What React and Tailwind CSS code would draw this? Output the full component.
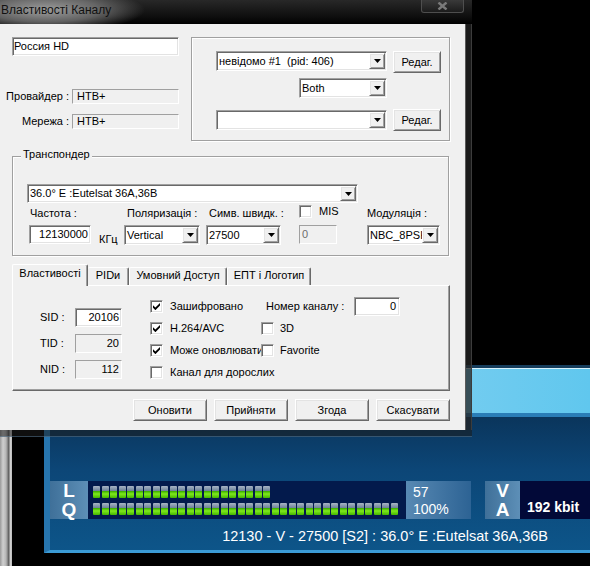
const SUNKEN =
  "border border-t-[#a0a0a0] border-l-[#a0a0a0] border-b-white border-r-white shadow-[inset_1px_1px_0_#696969,inset_-1px_-1px_0_#e3e3e3]";
const STATIC = "border border-t-[#a0a0a0] border-l-[#a0a0a0] border-b-white border-r-white";
const RAISED =
  "border border-t-white border-l-white border-b-[#696969] border-r-[#696969] shadow-[inset_1px_1px_0_#e3e3e3,inset_-1px_-1px_0_#a0a0a0]";
const ETCHED = "border border-[#a0a0a0] shadow-[inset_1px_1px_0_#fff,1px_1px_0_#fff]";

const SEG =
  "h-[12px] w-[7px] rounded-[1px] bg-[linear-gradient(to_bottom,#a7b4c4_0%,#71849b_38%,#3cae00_44%,#7fe91c_66%,#43b500_100%)]";

function DropBtn() {
  return (
    <div className={`flex w-[16px] shrink-0 items-center justify-center bg-[#f0f0f0] ${RAISED}`}>
      <svg width="7" height="4" viewBox="0 0 7 4">
        <path d="M0 0h7L3.5 4z" fill="#000" />
      </svg>
    </div>
  );
}

function Combo({ className = "", value = "" }) {
  return (
    <div className={`flex bg-white p-[1px] ${SUNKEN} ${className}`}>
      <div className="flex flex-1 items-center overflow-hidden whitespace-pre pl-[1px]">{value}</div>
      <DropBtn />
    </div>
  );
}

function Button({ className = "", children }) {
  return (
    <div className={`flex items-center justify-center bg-[#f0f0f0] ${RAISED} ${className}`}>{children}</div>
  );
}

function Check({ checked }) {
  return (
    <div className={`flex h-[13px] w-[13px] shrink-0 items-center justify-center bg-white ${SUNKEN}`}>
      {checked && (
        <svg width="7" height="7" viewBox="0 0 7 7">
          <path d="M0 2.2L2.4 4.6L7 0V2.6L2.4 7.2L0 4.8Z" fill="#000" />
        </svg>
      )}
    </div>
  );
}

function Tab({ className = "", children }) {
  return (
    <div
      className={`flex h-[18px] justify-center rounded-t-[2px] border-t border-r border-t-white border-r-[#696969] pt-[1px] whitespace-nowrap shadow-[inset_-1px_0_0_#a0a0a0] ${className}`}
    >
      {children}
    </div>
  );
}

function TitleBar() {
  return (
    <div className="flex h-[24px] w-[472px] items-start bg-[radial-gradient(ellipse_100px_22px_at_45px_10px,rgba(165,165,165,0.95),rgba(125,125,125,0.75)_55%,rgba(0,0,0,0)_100%),linear-gradient(to_bottom,#282828,#0e0e0e_70%,#000)]">
      <span className="pl-[1px] pt-[3px] text-[12px] leading-[14px] text-[#111]">Властивості Каналу</span>
      <div className="ml-auto mr-[8px] flex h-[13px] w-[43px] items-center justify-center rounded-b-[3px] border border-t-0 border-[#4e4e4e] bg-[linear-gradient(to_bottom,#3a3a3a,#1c1c1c)]">
        <svg width="11" height="8" viewBox="0 0 11 8">
          <path d="M1.5 0.5L9.5 7.5M9.5 0.5L1.5 7.5" stroke="#7a7a7a" strokeWidth="2.4" />
        </svg>
      </div>
    </div>
  );
}

function Client() {
  return (
    <div className="flex h-[406px] w-[465px] flex-col bg-[#f0f0f0]">
      {/* name / provider + audio group */}
      <div className="mt-[13px] flex h-[104px]">
        <div className="flex w-[179px] flex-col">
          <div className={`ml-[12px] flex h-[19px] w-[167px] items-center bg-white pl-[1px] ${SUNKEN}`}>Россия HD</div>
          <div className="mt-[33px] flex items-center">
            <span className="w-[69px] text-right">Провайдер :</span>
            <div className={`ml-[3px] flex h-[15px] w-[107px] items-center pl-[4px] ${STATIC}`}>НТВ+</div>
          </div>
          <div className="mt-[10px] flex items-center">
            <span className="w-[69px] text-right">Мережа :</span>
            <div className={`ml-[3px] flex h-[15px] w-[107px] items-center pl-[4px] ${STATIC}`}>НТВ+</div>
          </div>
        </div>
        <div className={`ml-[12px] flex h-[104px] w-[259px] flex-col pl-[24px] pt-[13px] ${ETCHED}`}>
          <div className="flex items-start gap-[6px]">
            <Combo className="h-[20px] w-[171px]" value="невідомо #1  (pid: 406)" />
            <Button className="h-[22px] w-[48px]">Редаг.</Button>
          </div>
          <div className="mt-[5px] flex w-[171px] justify-end">
            <Combo className="h-[20px] w-[88px]" value="Both" />
          </div>
          <div className="mt-[11px] flex items-center gap-[6px]">
            <Combo className="h-[20px] w-[171px]" />
            <Button className="h-[22px] w-[48px]">Редаг.</Button>
          </div>
        </div>
      </div>

      {/* transponder */}
      <div className={`relative ml-[12px] mt-[15px] h-[100px] w-[437px] pl-[14px] pt-[27px] ${ETCHED}`}>
        <span className="absolute -top-[9px] left-[8px] bg-[#f0f0f0] px-[2px]">Транспондер</span>
        <Combo className="h-[19px] w-[331px]" value="36.0° E :Eutelsat 36A,36B" />
        <div className="ml-[2px] mt-[4px] flex items-start">
          <div className="flex w-[62px] flex-col">
            <span className="ml-[1px] h-[13px] whitespace-nowrap">Частота :</span>
            <div className={`mt-[5px] flex h-[19px] w-[62px] items-center justify-end bg-white pr-[2px] ${SUNKEN}`}>12130000</div>
          </div>
          <span className="ml-[8px] mt-[26px] w-[25px]">КГц</span>
          <div className="flex w-[76px] flex-col">
            <span className="ml-[3px] h-[13px] whitespace-nowrap">Поляризація :</span>
            <Combo className="mt-[5px] h-[20px] w-[76px]" value="Vertical" />
          </div>
          <div className="ml-[6px] flex w-[75px] flex-col">
            <span className="ml-[3px] h-[13px] whitespace-nowrap">Симв. швидк. :</span>
            <Combo className="mt-[5px] h-[20px] w-[75px]" value="27500" />
          </div>
          <div className="ml-[18px] flex w-[38px] flex-col">
            <div className="-mt-[2px] mb-[2px] flex h-[13px] items-center">
              <Check />
              <span className="ml-[7px]">MIS</span>
            </div>
            <div className={`mt-[5px] flex h-[19px] w-[38px] items-center bg-[#f0f0f0] pl-[2px] text-[#6d6d6d] ${STATIC}`}>0</div>
          </div>
          <div className="ml-[30px] flex w-[73px] flex-col">
            <span className="h-[13px] whitespace-nowrap">Модуляція :</span>
            <Combo className="mt-[5px] h-[20px] w-[73px]" value="NBC_8PSK" />
          </div>
        </div>
      </div>

      {/* tabs */}
      <div className="ml-[12px] mt-[8px] flex h-[21px] items-end">
        <div className="relative z-10 -mb-px flex h-[22px] w-[76px] justify-center rounded-t-[2px] border-l border-t border-r border-l-white border-t-white border-r-[#696969] bg-[#f0f0f0] pt-[2px] shadow-[inset_-1px_0_0_#a0a0a0]">
          Властивості
        </div>
        <Tab className="w-[41px]">PIDи</Tab>
        <Tab className="w-[98px] border-l border-l-white">Умовний Доступ</Tab>
        <Tab className="w-[84px] border-l border-l-white">ЕПТ і Логотип</Tab>
      </div>
      <div className="ml-[12px] flex h-[106px] w-[438px] border border-t-white border-l-white border-b-[#696969] border-r-[#696969] shadow-[inset_-1px_-1px_0_#a0a0a0]">
        <div className="ml-[27px] flex flex-col gap-[7px] pt-[22px]">
          <div className="flex h-[19px] items-center">
            <span className="w-[35px]">SID :</span>
            <div className={`flex h-[19px] w-[47px] items-center justify-end bg-white pr-[2px] ${SUNKEN}`}>20106</div>
          </div>
          <div className="flex h-[19px] items-center">
            <span className="w-[35px]">TID :</span>
            <div className={`flex h-[19px] w-[47px] items-center justify-end pr-[2px] ${STATIC}`}>20</div>
          </div>
          <div className="flex h-[19px] items-center">
            <span className="w-[35px]">NID :</span>
            <div className={`flex h-[19px] w-[47px] items-center justify-end pr-[2px] ${STATIC}`}>112</div>
          </div>
        </div>
        <div className="ml-[28px] flex flex-col pt-[9px]">
          <div className="flex h-[22px] items-center">
            <div className="flex w-[111px] items-center">
              <Check checked />
              <span className="ml-[7px] whitespace-nowrap">Зашифровано</span>
            </div>
            <span className="ml-[5px] w-[88px] whitespace-nowrap">Номер каналу :</span>
            <div className={`flex h-[19px] w-[46px] items-center justify-end bg-white pr-[3px] ${SUNKEN}`}>0</div>
          </div>
          <div className="flex h-[22px] items-center">
            <div className="flex w-[111px] items-center">
              <Check checked />
              <span className="ml-[7px] whitespace-nowrap">H.264/AVC</span>
            </div>
            <Check />
            <span className="ml-[6px]">3D</span>
          </div>
          <div className="flex h-[22px] items-center">
            <div className="flex w-[111px] items-center">
              <Check checked />
              <span className="ml-[7px] w-[91px] overflow-hidden whitespace-nowrap">Може оновлювати</span>
            </div>
            <Check />
            <span className="ml-[6px]">Favorite</span>
          </div>
          <div className="flex h-[22px] items-center">
            <Check />
            <span className="ml-[7px] whitespace-nowrap">Канал для дорослих</span>
          </div>
        </div>
      </div>

      {/* dialog buttons */}
      <div className="mt-[8px] flex justify-end gap-[7px] pr-[15px]">
        <Button className="h-[22px] w-[74px]">Оновити</Button>
        <Button className="h-[22px] w-[74px]">Прийняти</Button>
        <Button className="h-[22px] w-[74px]">Згода</Button>
        <Button className="h-[22px] w-[74px]">Скасувати</Button>
      </div>
    </div>
  );
}

function Dialog() {
  return (
    <div className="absolute left-0 top-0 flex h-[437px] w-[472px] flex-col">
      <TitleBar />
      <div className="flex">
        <Client />
        <div className="w-[7px] bg-[rgba(36,36,36,0.75)] shadow-[inset_1px_0_0_#5a5a5a,inset_-1px_0_0_#3c3c3c]" />
      </div>
      <div className="h-[7px] bg-[rgba(28,28,28,0.55)] shadow-[inset_0_-1px_0_rgba(120,170,210,0.35)]" />
    </div>
  );
}

function Osd() {
  const lit = Array.from({ length: 21 });
  const full = Array.from({ length: 36 });
  return (
    <div className="absolute left-[44px] top-[365px] flex h-[188px] w-[546px] flex-col">
      <div className="h-[3px] bg-[#163d5c]" />
      <div className="h-[45px] bg-[linear-gradient(to_right,#b4e2f6,#8fd4f2_40%,#60c7ee)] shadow-[inset_0_1px_0_#d8f2fc]" />
      <div className="h-[4px] bg-[#2a7db7]" />
      <div className="flex flex-1 flex-col border-b-[3px] border-l-[6px] border-b-[#3b9bd5] border-l-[#2775ad] bg-[linear-gradient(to_bottom,#0a355c,#0c4677_40%,#0d5589)]">
        <div className="mt-[64px] flex h-[38px]">
          <div className="flex w-[38px] flex-col items-center justify-center bg-[linear-gradient(to_right,#3f7099,#5d8fb7)] text-[19px] font-bold leading-[19px] text-white">
            <span>L</span>
            <span>Q</span>
          </div>
          <div className="flex w-[318px] flex-col gap-[5px] bg-[#031a4c] pl-[5px] pt-[5px]">
            <div className="flex gap-[1.5px]">
              {lit.map((_, i) => (
                <div key={i} className={SEG} />
              ))}
            </div>
            <div className="flex gap-[1.5px]">
              {full.map((_, i) => (
                <div key={i} className={SEG} />
              ))}
            </div>
          </div>
          <div className="flex w-[65px] flex-col bg-[linear-gradient(to_right,#5889b3,#2d6394)] pl-[7px] pt-[3px] text-[14px] leading-[17px] text-white">
            <span>57</span>
            <span>100%</span>
          </div>
          <div className="w-[14px]" />
          <div className="flex w-[35px] flex-col items-center justify-center bg-[linear-gradient(to_right,#3f7099,#5d8fb7)] text-[19px] font-bold leading-[19px] text-white">
            <span>V</span>
            <span>A</span>
          </div>
          <div className="flex flex-1 items-end bg-[#020938] pb-[3px] pl-[7px] text-[14px] font-bold leading-[17px] text-white">
            192 kbit
          </div>
        </div>
        <div className="mt-[9px] pr-[42px] text-right text-[14.5px] leading-[16px] text-white">
          12130 - V - 27500 [S2] : 36.0° E :Eutelsat 36A,36B
        </div>
      </div>
    </div>
  );
}

export default function App() {
  return (
    <div className="relative h-[566px] w-[590px] overflow-hidden bg-black font-['Liberation_Sans',Arial,sans-serif] text-[11px] leading-[13px] text-black">
      <div className="absolute left-0 top-[430px] h-[136px] w-[13px] bg-[linear-gradient(to_right,#9a9a9a_0px,#cfcfcf_3px,#b6b6b6_6px,#7a7a7a_8px,#505050_9px,#d6d6d6_10px,#bcbcbc_12px,#000_12px)]" />
      <Osd />
      <Dialog />
    </div>
  );
}
